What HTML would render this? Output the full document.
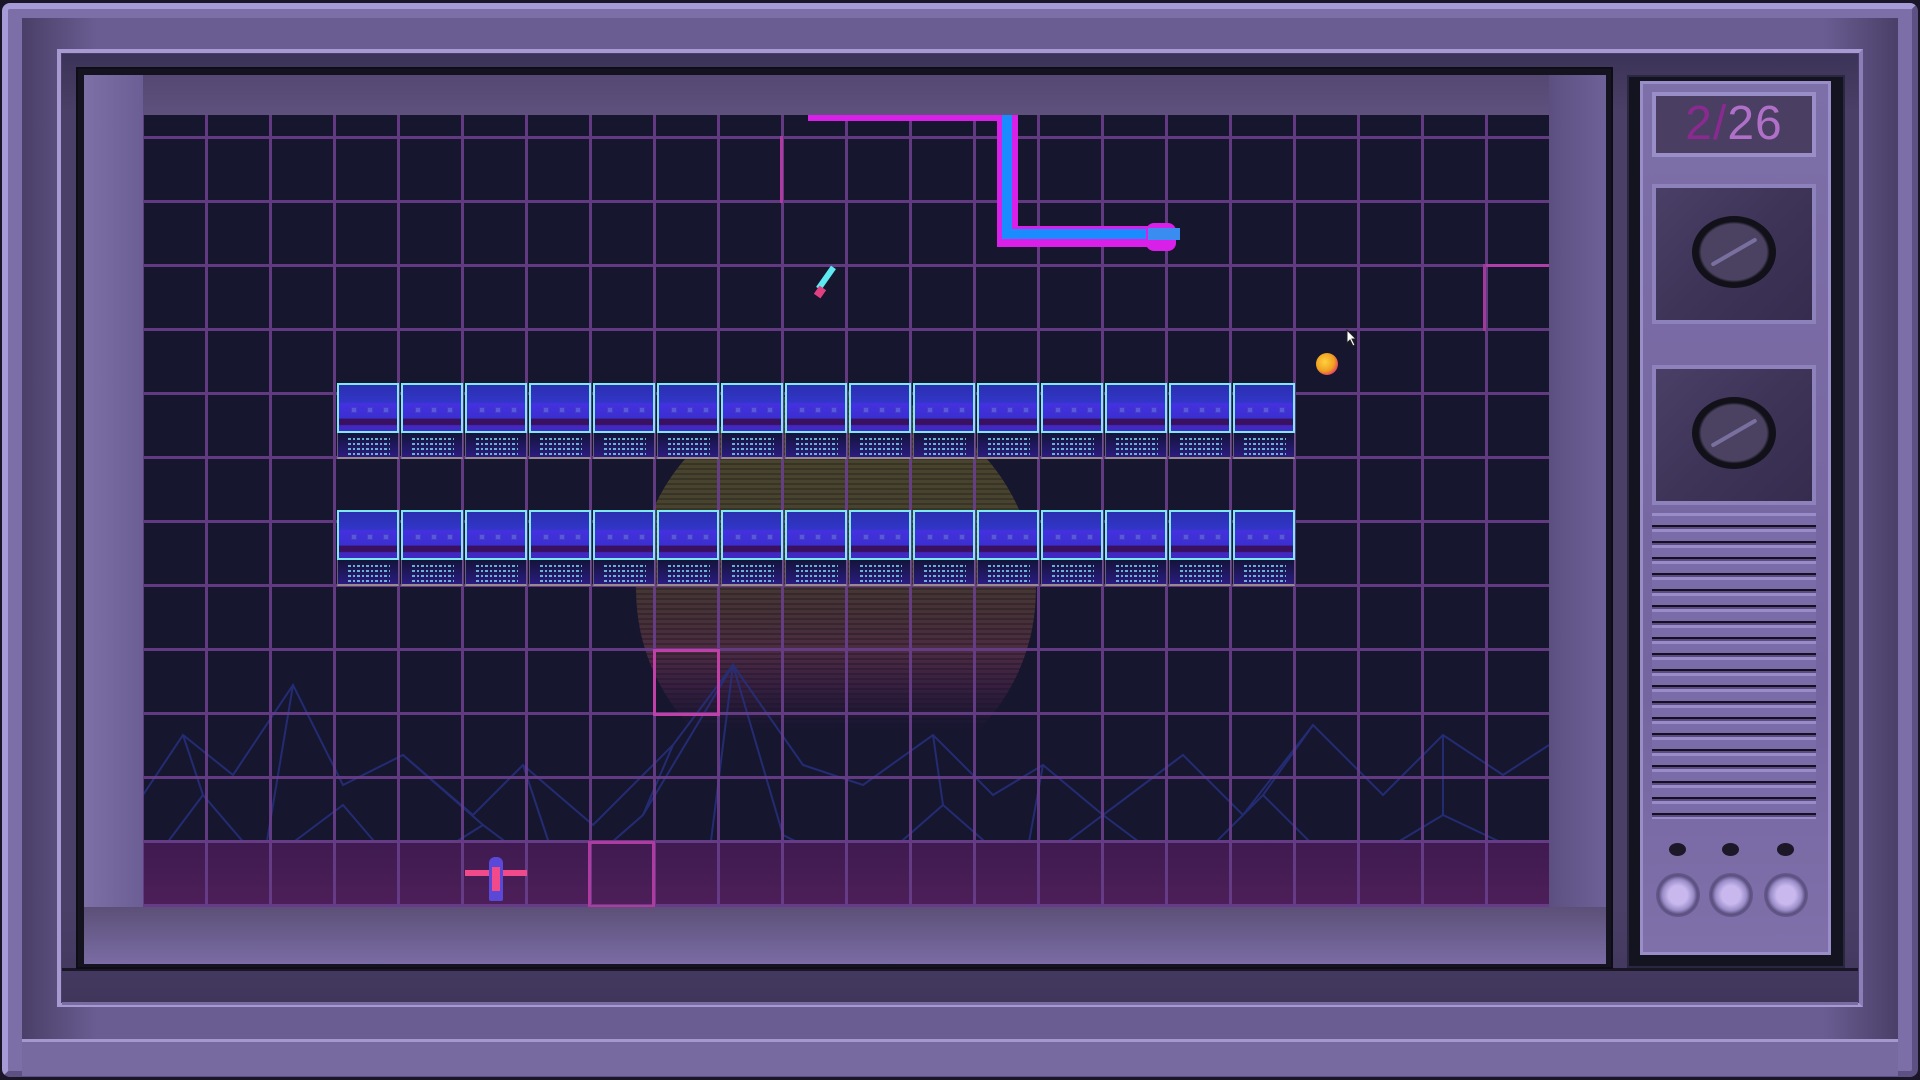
<!DOCTYPE html>
<html><head><meta charset="utf-8"><style>
*{margin:0;padding:0;box-sizing:border-box}
body{width:1920px;height:1080px;overflow:hidden;background:#1a1628;position:relative;font-family:"Liberation Sans",sans-serif}
.abs{position:absolute}
#outer{left:2px;top:3px;width:1916px;height:1074px;background:#7c6ea6;border:6px solid #a69bd6;border-right-color:#5d5083;border-bottom-color:#5d5083;border-radius:8px}
#b1{left:22px;top:18px;width:1876px;height:1040px;background:linear-gradient(90deg,#4a3f68,#6a5d92 4%,#6a5d92 96%,#4a3f68)}
#b2{left:57px;top:49px;width:1806px;height:958px;background:#4b4068;border:4px solid #a79ad3;border-right-color:#8a7db8;border-bottom-color:#a79ad3}
#b3{left:62px;top:54px;width:1796px;height:948px;background:linear-gradient(180deg,#3c3358,#4a3f66 6%,#4a3f66 90%,#40365c)}
#screenwrap{left:76px;top:67px;width:1537px;height:902px;background:#15131f;border:2px solid #0e0d15}
#bezel{left:84px;top:75px;width:1522px;height:889px;background:linear-gradient(180deg,#554872 0%,#5f527f 5%,#6f629a 60%,#7a6ca4 100%)}
#bezelL{left:84px;top:75px;width:59px;height:889px;background:linear-gradient(90deg,#7c70a6,#6b5e94)}
#bezelR{left:1549px;top:75px;width:57px;height:889px;background:linear-gradient(90deg,#5c4f80,#6e6198)}
#game{left:143px;top:115px;width:1406px;height:792px;background:#17162f;overflow:hidden}
.grid{position:absolute;left:-2px;top:0;width:1410px;height:792px;
background-image:repeating-linear-gradient(90deg,#6a3f8c 0 3px,transparent 3px 64px),repeating-linear-gradient(180deg,transparent 0 21px,#6a3f8c 21px 24px,transparent 24px 64px);opacity:.9}
.sun{position:absolute;left:493px;top:275px;width:400px;height:400px;border-radius:50%;
background:repeating-linear-gradient(180deg,rgba(0,0,0,0) 0 3px,rgba(0,0,0,.25) 3px 5px),linear-gradient(180deg,#5a5a2a 0%,#5f5530 35%,#5a3e3a 55%,#6a2e5a 75%,#3a1f48 100%);opacity:.7;
-webkit-mask:linear-gradient(180deg,#000 0 65%,transparent 85%)}
.mount{position:absolute;left:0;top:490px;width:1406px;height:302px}
.floor{position:absolute;left:0;top:725px;width:1406px;height:67px;background:linear-gradient(180deg,#3e1a50,#4e1f5a);}
.brick{position:absolute;width:62px;height:76px}
.bt{position:absolute;left:0;top:0;width:62px;height:50px;border:2px solid #7ee8f5;background:linear-gradient(180deg,#2a2fb0 0%,#3236c8 38%,#4530e0 40%,#3a2fd0 72%,#3a1060 74%,#3a1060 86%,#4028c0 88%)}
.bt i{position:absolute;top:22px;width:6px;height:6px;background:#5a58e0;border:1px solid #4440c0}
.bb{position:absolute;left:0;top:50px;width:62px;height:26px;background:linear-gradient(180deg,#14143a,#2a1c80);border-bottom:2px solid #9a8a90;border-left:1px solid #6a5a80;border-right:1px solid #6a5a80}
.bb:before{content:"";position:absolute;left:10px;top:5px;width:42px;height:17px;background:repeating-linear-gradient(180deg,#7fd8f0 0 2px,transparent 2px 5px);-webkit-mask:repeating-linear-gradient(90deg,#000 0 3px,transparent 3px 5px,#000 5px 7px,transparent 7px 9px);opacity:.8}
#panelO{left:1627px;top:75px;width:218px;height:893px;background:#141320;border:2px solid #2a2740}
#panel{left:1640px;top:81px;width:191px;height:874px;background:linear-gradient(180deg,#7d6fa8,#7464a0 70%,#8070aa);border:3px solid #9a8ec8}
.pbox{position:absolute;left:1652px;width:164px;background:linear-gradient(135deg,#4a3f66,#3e3458 50%,#352c4e);border:4px solid #8e82bc}
.knob{position:absolute;left:36px;width:84px;height:72px;border-radius:50%;background:radial-gradient(ellipse,#4a4260 0 55%,#121018 60% 72%,#7d6fa8 74%,transparent 77%)}
.knob:after{content:"";position:absolute;left:16px;top:34px;width:52px;height:4px;background:#7a70a0;transform:rotate(-30deg);border-radius:2px}
#grille{left:1652px;top:513px;width:164px;height:306px;background:repeating-linear-gradient(180deg,#9a8cc8 0 3px,#7a6ca8 3px 12px,#150f20 12px 14px,#5a4d82 14px 16px)}
.dot{position:absolute;top:843px;width:17px;height:13px;border-radius:50%;background:#1c1828}
.btn{position:absolute;top:873px;width:44px;height:44px;border-radius:50%;background:radial-gradient(circle,#c8b8ee 0 30%,#9a8cc8 50%,#5c5080 62%,#6a5c92 75%,#4a3f68 82%,transparent 86%)}
</style></head><body>
<div id="outer" class="abs"></div>
<div id="b1" class="abs"></div>
<div id="b2" class="abs"></div>
<div id="b3" class="abs"></div>
<div class="abs" style="left:62px;top:968px;width:1796px;height:3px;background:#1a1628"></div>
<div class="abs" style="left:62px;top:1002px;width:1796px;height:3px;background:#7a6ca0"></div>
<div class="abs" style="left:22px;top:1039px;width:1876px;height:3px;background:#a598cc"></div>
<div class="abs" style="left:22px;top:1042px;width:1876px;height:34px;background:#776aa0"></div>
<div id="screenwrap" class="abs"></div>
<div id="bezel" class="abs"></div>
<div id="bezelL" class="abs"></div>
<div id="bezelR" class="abs"></div>
<div class="abs" style="left:84px;top:907px;width:1522px;height:57px;background:linear-gradient(180deg,#5c5078,#7a6ca4)"></div>
<div id="game" class="abs">
  <div class="sun"></div>
  <svg class="mount" viewBox="0 0 1406 302" width="1406" height="302">
    <g stroke="#26307e" stroke-width="2" fill="none" opacity=".85">
      <path d="M0 190 L40 130 L90 170 L150 80 L200 180 L260 150 L330 210 L380 160 L450 220 L530 140 L590 60 L660 160 L720 180 L790 130 L850 190 L900 160 L960 210 L1040 150 L1100 210 L1170 120 L1240 190 L1300 130 L1360 170 L1406 140"/>
      <path d="M0 270 L60 190 L120 260 L200 200 L260 270 L340 220 L420 280 L500 210 L590 60 L640 230 L720 270 L800 200 L880 270 L960 210 L1040 270 L1120 190 L1200 270 L1300 210 L1406 260"/>
      <path d="M150 80 L120 260 M530 140 L500 210 M790 130 L800 200 M1170 120 L1120 190 M1040 150 L960 210 M260 150 L340 220 M590 60 L560 300 M40 130 L60 190 M1300 130 L1300 210 M380 160 L420 280 M900 160 L880 270"/>
    </g>
  </svg>
  <div class="floor"></div>
  <div class="grid"></div>
  <div class="abs" style="left:510px;top:534px;width:67px;height:67px;border:3px solid #c040a8"></div>
  <div class="abs" style="left:445px;top:726px;width:67px;height:67px;border:3px solid #b03aa0"></div>
  <div class="abs" style="left:637px;top:21px;width:3px;height:67px;background:#b03aa0"></div>
  <div class="abs" style="left:1340px;top:149px;width:66px;height:3px;background:#b040a8"></div>
  <div class="abs" style="left:1340px;top:149px;width:3px;height:67px;background:#a03a98"></div>
  <!-- pipe -->
  <div class="abs" style="left:665px;top:0;width:202px;height:6px;background:#d820e8"></div>
  <div class="abs" style="left:854px;top:-2px;width:21px;height:133px;background:#d820e8;border-radius:0 0 0 4px"></div>
  <div class="abs" style="left:854px;top:111px;width:160px;height:21px;background:#d820e8"></div>
  <div class="abs" style="left:859px;top:-2px;width:10px;height:126px;background:#1a8cff"></div>
  <div class="abs" style="left:859px;top:114px;width:150px;height:10px;background:#1a8cff"></div>
  <div class="abs" style="left:1003px;top:108px;width:30px;height:28px;background:#d820e8;border-radius:8px"></div>
  <div class="abs" style="left:1005px;top:113px;width:32px;height:12px;background:#3a8cf0"></div>
  <!-- missile -->
  <div class="abs" style="left:680px;top:150px;width:6px;height:26px;background:#5ee8f0;transform:rotate(35deg)"></div>
  <div class="abs" style="left:673px;top:172px;width:8px;height:10px;background:#e04080;transform:rotate(35deg)"></div>
  <!-- ball -->
  <div class="abs" style="left:1173px;top:238px;width:22px;height:22px;border-radius:50%;background:radial-gradient(circle at 40% 40%,#ffd040,#f0a020 50%,#e03070 80%)"></div>
  <!-- player -->
  <div class="abs" style="left:322px;top:755px;width:62px;height:6px;background:#f04a8a"></div>
  <div class="abs" style="left:346px;top:742px;width:14px;height:44px;background:#5a48d8;border-radius:6px 6px 2px 2px"></div>
  <div class="abs" style="left:349px;top:752px;width:8px;height:24px;background:#f04a8a"></div>
</div>
<!-- bricks -->
<div id="bricks">
<div class="brick" style="left:337px;top:383px"><div class="bt"><i style="left:12px"></i><i style="left:28px"></i><i style="left:44px"></i></div><div class="bb"></div></div>
<div class="brick" style="left:401px;top:383px"><div class="bt"><i style="left:12px"></i><i style="left:28px"></i><i style="left:44px"></i></div><div class="bb"></div></div>
<div class="brick" style="left:465px;top:383px"><div class="bt"><i style="left:12px"></i><i style="left:28px"></i><i style="left:44px"></i></div><div class="bb"></div></div>
<div class="brick" style="left:529px;top:383px"><div class="bt"><i style="left:12px"></i><i style="left:28px"></i><i style="left:44px"></i></div><div class="bb"></div></div>
<div class="brick" style="left:593px;top:383px"><div class="bt"><i style="left:12px"></i><i style="left:28px"></i><i style="left:44px"></i></div><div class="bb"></div></div>
<div class="brick" style="left:657px;top:383px"><div class="bt"><i style="left:12px"></i><i style="left:28px"></i><i style="left:44px"></i></div><div class="bb"></div></div>
<div class="brick" style="left:721px;top:383px"><div class="bt"><i style="left:12px"></i><i style="left:28px"></i><i style="left:44px"></i></div><div class="bb"></div></div>
<div class="brick" style="left:785px;top:383px"><div class="bt"><i style="left:12px"></i><i style="left:28px"></i><i style="left:44px"></i></div><div class="bb"></div></div>
<div class="brick" style="left:849px;top:383px"><div class="bt"><i style="left:12px"></i><i style="left:28px"></i><i style="left:44px"></i></div><div class="bb"></div></div>
<div class="brick" style="left:913px;top:383px"><div class="bt"><i style="left:12px"></i><i style="left:28px"></i><i style="left:44px"></i></div><div class="bb"></div></div>
<div class="brick" style="left:977px;top:383px"><div class="bt"><i style="left:12px"></i><i style="left:28px"></i><i style="left:44px"></i></div><div class="bb"></div></div>
<div class="brick" style="left:1041px;top:383px"><div class="bt"><i style="left:12px"></i><i style="left:28px"></i><i style="left:44px"></i></div><div class="bb"></div></div>
<div class="brick" style="left:1105px;top:383px"><div class="bt"><i style="left:12px"></i><i style="left:28px"></i><i style="left:44px"></i></div><div class="bb"></div></div>
<div class="brick" style="left:1169px;top:383px"><div class="bt"><i style="left:12px"></i><i style="left:28px"></i><i style="left:44px"></i></div><div class="bb"></div></div>
<div class="brick" style="left:1233px;top:383px"><div class="bt"><i style="left:12px"></i><i style="left:28px"></i><i style="left:44px"></i></div><div class="bb"></div></div>
<div class="brick" style="left:337px;top:510px"><div class="bt"><i style="left:12px"></i><i style="left:28px"></i><i style="left:44px"></i></div><div class="bb"></div></div>
<div class="brick" style="left:401px;top:510px"><div class="bt"><i style="left:12px"></i><i style="left:28px"></i><i style="left:44px"></i></div><div class="bb"></div></div>
<div class="brick" style="left:465px;top:510px"><div class="bt"><i style="left:12px"></i><i style="left:28px"></i><i style="left:44px"></i></div><div class="bb"></div></div>
<div class="brick" style="left:529px;top:510px"><div class="bt"><i style="left:12px"></i><i style="left:28px"></i><i style="left:44px"></i></div><div class="bb"></div></div>
<div class="brick" style="left:593px;top:510px"><div class="bt"><i style="left:12px"></i><i style="left:28px"></i><i style="left:44px"></i></div><div class="bb"></div></div>
<div class="brick" style="left:657px;top:510px"><div class="bt"><i style="left:12px"></i><i style="left:28px"></i><i style="left:44px"></i></div><div class="bb"></div></div>
<div class="brick" style="left:721px;top:510px"><div class="bt"><i style="left:12px"></i><i style="left:28px"></i><i style="left:44px"></i></div><div class="bb"></div></div>
<div class="brick" style="left:785px;top:510px"><div class="bt"><i style="left:12px"></i><i style="left:28px"></i><i style="left:44px"></i></div><div class="bb"></div></div>
<div class="brick" style="left:849px;top:510px"><div class="bt"><i style="left:12px"></i><i style="left:28px"></i><i style="left:44px"></i></div><div class="bb"></div></div>
<div class="brick" style="left:913px;top:510px"><div class="bt"><i style="left:12px"></i><i style="left:28px"></i><i style="left:44px"></i></div><div class="bb"></div></div>
<div class="brick" style="left:977px;top:510px"><div class="bt"><i style="left:12px"></i><i style="left:28px"></i><i style="left:44px"></i></div><div class="bb"></div></div>
<div class="brick" style="left:1041px;top:510px"><div class="bt"><i style="left:12px"></i><i style="left:28px"></i><i style="left:44px"></i></div><div class="bb"></div></div>
<div class="brick" style="left:1105px;top:510px"><div class="bt"><i style="left:12px"></i><i style="left:28px"></i><i style="left:44px"></i></div><div class="bb"></div></div>
<div class="brick" style="left:1169px;top:510px"><div class="bt"><i style="left:12px"></i><i style="left:28px"></i><i style="left:44px"></i></div><div class="bb"></div></div>
<div class="brick" style="left:1233px;top:510px"><div class="bt"><i style="left:12px"></i><i style="left:28px"></i><i style="left:44px"></i></div><div class="bb"></div></div>
</div>
<!-- cursor -->
<svg class="abs" style="left:1346px;top:329px" width="12" height="18" viewBox="0 0 12 18"><path d="M1 1 L1 14 L4 11 L7 17 L9 16 L6 10 L10 10 Z" fill="#fff" stroke="#222" stroke-width="1"/></svg>
<!-- right panel -->
<div id="panelO" class="abs"></div>
<div id="panel" class="abs"></div>
<div class="abs" style="left:1652px;top:92px;width:164px;height:65px;background:#4a3e62;border:4px solid #9a8ec8;color:#b070c8;font-size:48px;line-height:56px;text-align:center;letter-spacing:1px"><span style="color:#8a2a90">2/</span>26</div>
<div class="pbox" style="top:184px;height:140px"><div class="knob" style="top:28px"></div></div>
<div class="pbox" style="top:365px;height:140px"><div class="knob" style="top:28px"></div></div>
<div id="grille" class="abs"></div>
<div class="dot" style="left:1669px"></div>
<div class="dot" style="left:1722px"></div>
<div class="dot" style="left:1777px"></div>
<div class="btn" style="left:1656px"></div>
<div class="btn" style="left:1709px"></div>
<div class="btn" style="left:1764px"></div>
</body></html>
